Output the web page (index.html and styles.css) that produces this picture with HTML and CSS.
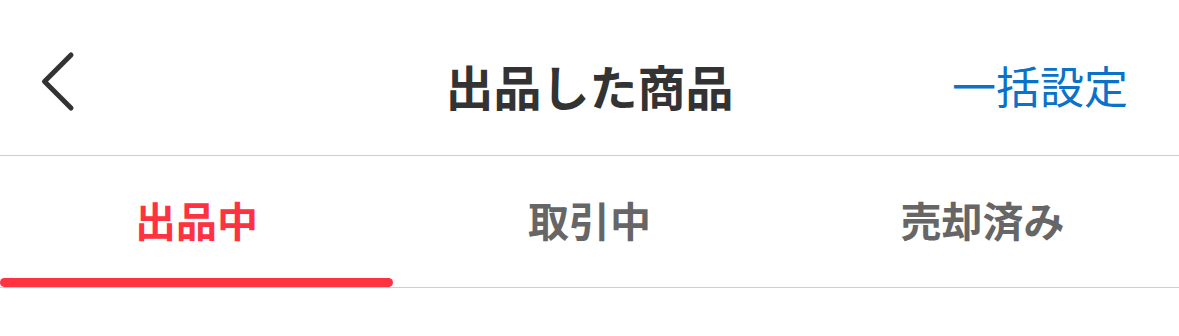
FILE: index.html
```html
<!DOCTYPE html>
<html lang="ja">
<head>
<meta charset="utf-8">
<link rel="stylesheet" href="styles.css">
</head>
<body>
<header class="header">
  <button class="back" aria-label="戻る">
    <svg width="40" height="64" viewBox="0 0 40 64"><path d="M31 4 L4.5 30.5 L31 57" fill="none" stroke="#333" stroke-width="5" stroke-linecap="round" stroke-linejoin="round"/></svg>
  </button>
  <h1 class="title">出品した商品</h1>
  <a class="action">一括設定</a>
</header>
<nav class="tabs">
  <div class="tab active"><span class="label">出品中</span><span class="bar"></span></div>
  <div class="tab"><span class="label">取引中</span><span class="bar"></span></div>
  <div class="tab"><span class="label">売却済み</span><span class="bar"></span></div>
</nav>
</body>
</html>
```
FILE: styles.css
```css
html, body { margin: 0; padding: 0; background: #fff; }
body { font-family: "Noto Sans CJK JP", "Noto Sans", sans-serif; width: 1179px; }
.header {
  height: 156px;
  padding-top: 14px;
  box-sizing: border-box;
  border-bottom: 1px solid #cfcfcf;
  display: grid;
  grid-template-columns: 1fr auto 1fr;
  align-items: center;
}
.back {
  justify-self: start;
  background: none; border: 0; padding: 0;
  margin-left: 40px;
  margin-top: -4px;
  width: 40px; height: 64px;
  display: flex;
}
.title {
  margin: 0;
  font-size: 48px;
  font-weight: 700;
  color: #333;
  line-height: 1;
}
.action {
  justify-self: end;
  margin-right: 51px;
  font-size: 44px;
  color: #0a72c8;
  line-height: 1;
}
.tabs {
  display: grid;
  grid-template-columns: repeat(3, 1fr);
  height: 131px;
  border-bottom: 1px solid #cfcfcf;
}
.tab {
  display: flex;
  flex-direction: column;
  align-items: stretch;
}
.label {
  flex: 1;
  display: flex;
  align-items: center;
  justify-content: center;
  font-size: 41px;
  font-weight: 700;
  color: #666;
  padding-top: 4px;
}
.bar { height: 9px; border-radius: 5px; }
.tab.active .label { color: #ff3242; }
.tab.active .bar { background: #ff3242; }
```
